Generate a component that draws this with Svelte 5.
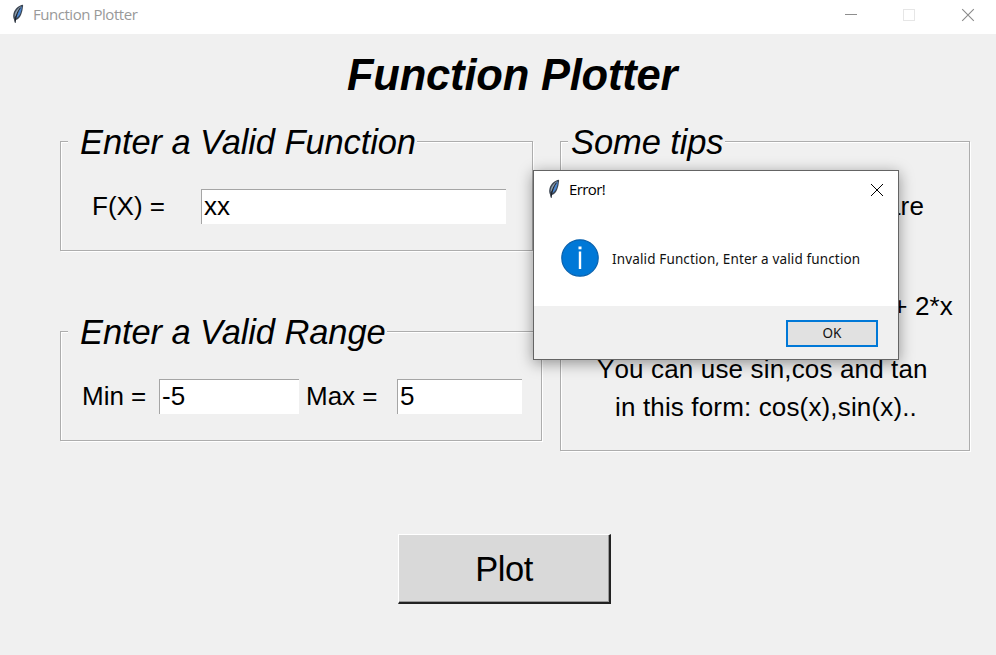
<script>
  let fx = $state('xx');
  let min = $state('-5');
  let max = $state('5');
</script>

{#snippet feather()}
  <svg class="feather" width="14" height="20" viewBox="0 0 14 20">
    <path d="M11.800.8C8 1.400 3.700 4.900 2.500 9.400c-.6 2.300-.3 4.200.5 6l.9 3.600.8-.1.3-3c2.300-.8 4.300-2.800 5.300-5.700.8-2.400 1.400-4.200 1.500-6.400.3-1.300.6-2.400 0-3z" fill="#3b4552" />
    <path d="M10.200 2C7 4 4.300 7 3.700 10.500l-.1 2.800C6.500 10 8 6.200 10.200 2z" fill="#8c9cab" />
    <path d="M10.900 2C8.400 5 6.700 9.500 5.300 14c2-.8 3.400-2.700 4-4.500.8-2.100 1.500-4.500 1.600-7.500z" fill="#4a86d0" />
    <path d="M9.200 4C6.600 7.500 4.800 11.500 4.100 17.500" fill="none" stroke="#141a22" stroke-width=".9" />
  </svg>
{/snippet}

<div class="window">
  <header class="titlebar">
    {@render feather()}
    <span class="caption">Function Plotter</span>
    <svg class="controls" width="130" height="14" viewBox="0 0 130 14">
      <path d="M0 6.500H12" stroke="#8e8e8e" />
      <rect x="58.500" y="1.500" width="11" height="11" fill="none" stroke="#e6e6e6" />
      <path d="M117.200 1.200l11.600 11.600M128.800 1.200l-11.600 11.600" stroke="#8a8a8a" stroke-width="1.100" />
    </svg>
  </header>

  <main>
    <h1>Function Plotter</h1>
    <div class="columns">
      <div class="left">
        <section class="frame function">
          <h2>Enter a Valid Function</h2>
          <div class="row">
            <label for="fx">F(X) =</label>
            <input id="fx" bind:value={fx} />
          </div>
        </section>
        <section class="frame range">
          <h2>Enter a Valid Range</h2>
          <div class="row">
            <label for="min">Min =</label>
            <input id="min" bind:value={min} />
            <label for="max">Max =</label>
            <input id="max" bind:value={max} />
          </div>
        </section>
      </div>
      <section class="frame tips">
        <h2>Some tips</h2>
        <p class="are">are</p>
        <p class="sum">+ 2*x</p>
        <p class="use">You can use sin,cos and tan</p>
        <p class="form">in this form: cos(x),sin(x)..</p>
      </section>
    </div>
    <button class="plot">Plot</button>
  </main>

  <div class="dialog" role="alertdialog" aria-labelledby="dialog-title">
    <header>
      {@render feather()}
      <span id="dialog-title">Error!</span>
      <svg class="close" width="14" height="14" viewBox="0 0 14 14">
        <path d="M1 1l12 12M13 1L1 13" stroke="#000" stroke-width="1" />
      </svg>
    </header>
    <div class="message">
      <svg width="38" height="38" viewBox="0 0 38 38">
        <circle cx="19" cy="19" r="18.200" fill="#0078d7" stroke="#0961ad" stroke-width="1.200" />
        <rect x="17.500" y="7.500" width="3" height="2.800" fill="#fff" />
        <rect x="17.800" y="12.500" width="2.400" height="17.500" fill="#fff" />
      </svg>
      <span>Invalid Function, Enter a valid function</span>
    </div>
    <footer><button>OK</button></footer>
  </div>
</div>

<style>
  :global(body) { margin: 0; background: #f0f0f0; }
  .window {
    position: relative;
    box-sizing: border-box;
    width: 996px;
    height: 655px;
    overflow: hidden;
    background: #f0f0f0;
    color: #000;
    font-family: "Liberation Sans", Arial, sans-serif;
    font-kerning: none;
  }
  h1, h2, p { margin: 0; font-weight: normal; white-space: pre; }
  .feather { flex: none; }
  .titlebar {
    display: flex;
    align-items: center;
    box-sizing: border-box;
    height: 34px;
    padding: 0 21px 4px 11px;
    background: #fff;
    color: #999;
    font: 15px/20px "Open Sans", sans-serif;
  }
  .titlebar .feather { margin-top: -3px; }
  .caption { margin: -2px 0 0 8px; letter-spacing: -0.46px; white-space: pre; }
  .controls { margin-left: auto; }

  main { display: flex; flex-direction: column; }
  h1 {
    margin: 16px 0 0 347px;
    font: italic bold 43.500px/50px "Liberation Sans", Arial, sans-serif;
    letter-spacing: -0.200px;
  }
  .columns { display: flex; gap: 18px; margin: 41px 0 0 60px; }
  .left { display: flex; flex-direction: column; gap: 80px; width: 482px; align-items: flex-start; }
  .frame {
    box-sizing: border-box;
    border: 1px solid #adadad;
    box-shadow: inset 1px 1px #fff, 1px 1px #fff;
  }
  .function { width: 473px; height: 110px; }
  .range { width: 482px; height: 110px; }
  .tips { width: 410px; height: 310px; margin-bottom: 1px; }
  h2 {
    width: max-content;
    height: 40px;
    margin: -20px 0 0 7px;
    padding: 0 1px 0 12px;
    background: #f0f0f0;
    font: italic 34.500px/40px "Liberation Sans", Arial, sans-serif;
    letter-spacing: -0.100px;
  }
  .tips h2 { padding-left: 3px; }
  .row { display: flex; align-items: center; height: 36px; margin-top: 26px; font-size: 26px; white-space: pre; }
  input {
    box-sizing: border-box;
    height: 35px;
    padding: 0 1px;
    border: 0 solid #a5a5a5;
    border-width: 1.500px 0 0 1.500px;
    border-radius: 0;
    outline: none;
    background: #fff;
    color: #000;
    font: 26px/32px "Liberation Sans", Arial, sans-serif;
  }
  .function label { width: 109px; margin-left: 31px; }
  #fx { width: 305px; padding-left: 2px; }
  .range label { width: 77px; margin-left: 21px; }
  #min { width: 140px; padding-left: 2px; }
  .range #min + label { width: 91px; margin-left: 7px; }
  #max { width: 125px; padding-left: 2px; }
  .tips p { font-size: 26px; line-height: 36px; letter-spacing: 0.150px; }
  .are { margin: 26px 45px 0 0; text-align: right; }
  .tips .sum { margin: 64px 16px 0 0; text-align: right; }
  .tips .use { margin: 27px 0 0 36px; }
  .tips .form { margin: 2px 0 0 54px; }
  .plot {
    box-sizing: border-box;
    width: 213px;
    height: 70px;
    margin: 82px 0 0 398px;
    padding: 0;
    border: 2px solid;
    border-width: 1px 2px 2px 1px;
    border-color: #fff #222 #222 #fff;
    background: #d9d9d9;
    box-shadow: inset -1px -1px #999;
    color: #000;
    font: 34.500px/40px "Liberation Sans", Arial, sans-serif;
    letter-spacing: -0.500px;
  }

  .dialog {
    position: absolute;
    left: 533px;
    top: 170px;
    box-sizing: border-box;
    width: 366px;
    height: 190px;
    display: flex;
    flex-direction: column;
    border: 1px solid #646464;
    background: #fff;
    box-shadow: 0 3px 14px rgba(0, 0, 0, 0.4);
    font-family: "Open Sans", sans-serif;
    white-space: pre;
  }
  .dialog header { display: flex; align-items: center; height: 38px; padding: 0 14px 0 13px; font-size: 15px; }
  .dialog header .feather { margin-top: -2px; }
  #dialog-title { margin: -2px 0 0 8px; letter-spacing: -0.600px; }
  .close { margin-left: auto; }
  .message { display: flex; align-items: center; height: 97px; padding-left: 27px; font: 13.500px/20px "Noto Sans", sans-serif; }
  .message svg { margin-top: 1px; }
  .message span { margin: 2px 0 0 13px; color: #111; letter-spacing: 0.140px; }
  footer { display: flex; flex: 1; align-items: center; justify-content: flex-end; padding: 1px 20px 0 0; background: #f0f0f0; }
  footer button {
    box-sizing: border-box;
    width: 92px;
    height: 27px;
    padding: 0;
    border: 2px solid #0078d7;
    background: #e1e1e1;
    color: #111;
    font: 13.500px/20px "Noto Sans", sans-serif;
  }
</style>
